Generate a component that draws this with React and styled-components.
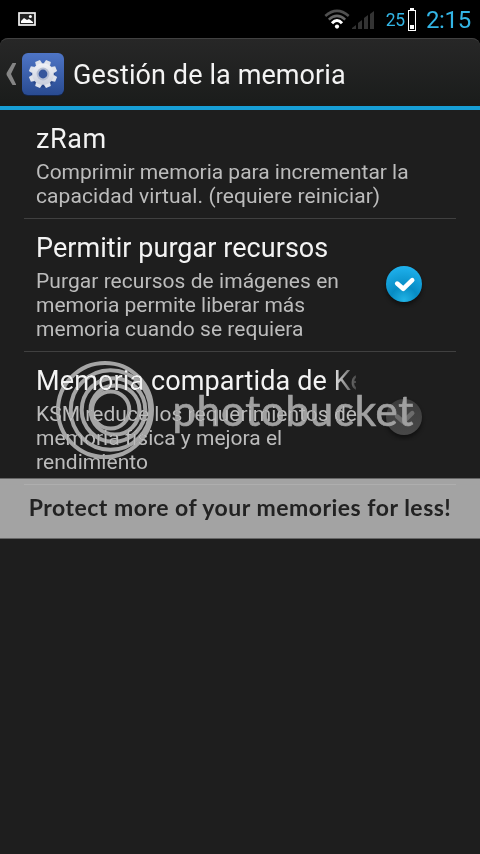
import styled, { createGlobalStyle } from "styled-components";

const preferences = [
    {
        title: "zRam",
        titleSpacing: 0.6,
        lines: [
            ["Comprimir memoria para incrementar la", -0.02],
            ["capacidad virtual. (requiere reiniciar)", 0.09],
        ],
    },
    {
        title: "Permitir purgar recursos",
        titleSpacing: 0.05,
        lines: [
            ["Purgar recursos de imágenes en", 0.05],
            ["memoria permite liberar más", -0.03],
            ["memoria cuando se requiera", 0.04],
        ],
        toggle: "on",
    },
    {
        title: "Memoria compartida de Kernel",
        titleSpacing: 0.12,
        lines: [
            ["KSM reduce los requerimientos de", 0.03],
            ["memoria física y mejora el", 0],
            ["rendimiento", 0.05],
        ],
        toggle: "off",
        fade: true,
    },
];

const PictureIcon = () => (
    <svg width="18" height="14" viewBox="0 0 18 14">
        <rect x="1" y="1" width="16" height="12" fill="#222" stroke="#f2f2f2" strokeWidth="1.7" />
        <path d="M3 11V9l3-3 3 2 2-1 4 3v1z" fill="#fff" />
        <circle cx="12.4" cy="4.4" r="1.5" fill="#fff" />
    </svg>
);

const WifiIcon = () => (
    <svg width="26" height="20" viewBox="0 0 26 20" fill="none" strokeWidth="2.5">
        <path d="M1.3 7Q13 -3.2 24.7 7" stroke="#505050" />
        <path d="M4.8 10.6Q13 3.2 21.2 10.6" stroke="#666" />
        <path d="M8 14.3Q13 8.7 18 14.3" stroke="#fff" strokeWidth="3" />
        <circle cx="13" cy="17.6" r="2.1" fill="#fff" />
    </svg>
);

const SignalIcon = () => (
    <svg width="22" height="18" viewBox="0 0 22 18" fill="#333">
        <path d="M0 18v-1l4-3v4zM6 18v-6l4-3v9zM12 18V7l4-3v14zM18 18V3l4-3v18z" />
    </svg>
);

const BatteryIcon = () => (
    <svg width="8" height="23" viewBox="0 0 8 23">
        <path d="M2 0h4v2H2z" fill="#fff" />
        <rect x=".5" y="2.5" width="7" height="20" fill="none" stroke="#fff" />
        <path d="M2 17h4v4H2z" fill="#fff" />
    </svg>
);

const BackIcon = () => (
    <svg width="11" height="22" viewBox="0 0 11 22">
        <path d="M7.5 0h3.9L6 11l5.4 11H7.5L1.6 12v-2z" fill="#858585" />
    </svg>
);

const teeth = [22.5, 67.5, 112.5, 157.5, 202.5, 247.5, 292.5, 337.5];

const GearIcon = () => (
    <svg width="42" height="43" viewBox="0 0 42 43">
        <defs>
            <linearGradient id="tile" x2="0" y2="1">
                <stop offset="0" stopColor="#4e75c6" />
                <stop offset="1" stopColor="#294b91" />
            </linearGradient>
            <linearGradient id="metal" gradientUnits="userSpaceOnUse" x1="0" y1="-14" x2="0" y2="14">
                <stop offset="0" stopColor="#f6f7fb" />
                <stop offset="1" stopColor="#c3c9d8" />
            </linearGradient>
        </defs>
        <rect y="1" width="42" height="42" rx="6" fill="#142549" />
        <rect width="42" height="42" rx="6" fill="url(#tile)" />
        <circle cx="21" cy="22.5" r="12" fill="#1f3b78" opacity=".6" />
        <g transform="translate(21 21)" fill="url(#metal)">
            {teeth.map((angle) => (
                <path key={angle} d="M-3.4-10l.8-4.2h5.2l.8 4.2z" transform={`rotate(${angle})`} fill="#dfe3ec" />
            ))}
            <circle r="10.8" />
            <circle r="6.4" fill="#b5bed3" />
            <circle r="4.4" fill="#35569d" />
        </g>
    </svg>
);

const Toggle = ({ on }) => (
    <svg width="48" height="48" viewBox="0 0 48 48">
        <defs>
            <radialGradient id="blue" cy=".95" r=".95">
                <stop offset="0" stopColor="#22b4e6" />
                <stop offset=".4" stopColor="#078cc4" />
                <stop offset="1" stopColor="#1fb2ee" />
            </radialGradient>
            <linearGradient id="grey" x2="0" y2="1">
                <stop offset="0" stopColor="#3c3c3c" />
                <stop offset="1" stopColor="#484848" />
            </linearGradient>
            <filter id="soft" x="-30%" y="-30%" width="160%" height="160%">
                <feGaussianBlur stdDeviation="2" />
            </filter>
        </defs>
        <circle cx="24" cy="27" r="18" fill="#000" opacity=".45" filter="url(#soft)" />
        <circle cx="24" cy="24" r="18" fill={on ? "url(#blue)" : "url(#grey)"} />
        <path
            d="M17.2 23.6l6 5.2 9-8.6"
            fill="none"
            stroke={on ? "#fff" : "#6c6c6c"}
            strokeWidth="4.6"
            strokeLinecap="round"
            strokeLinejoin="round"
        />
    </svg>
);

const Rings = () => (
    <svg width="98" height="98" viewBox="0 0 98 98" fill="none" stroke="#a5a5a5" strokeWidth="4">
        <circle cx="49" cy="49" r="47" />
        <circle cx="54.5" cy="49" r="39.8" />
        <circle cx="57.5" cy="49" r="31.8" />
        <circle cx="59" cy="49" r="24.5" />
        <circle cx="54.7" cy="49" r="18.6" />
    </svg>
);

const App = () => {
    return (
        <>
            <GlobalStyle />
            <Screen>
                <StatusBar>
                    <PictureIcon />
                    <StatusRight>
                        <WifiIcon />
                        <SignalIcon />
                        <BatteryLevel>25</BatteryLevel>
                        <BatteryIcon />
                        <Clock>2:15</Clock>
                    </StatusRight>
                </StatusBar>
                <ActionBar>
                    <BackIcon />
                    <GearIcon />
                    <h1>Gestión de la memoria</h1>
                </ActionBar>
                <List>
                    {preferences.map((item) => (
                        <Row key={item.title}>
                            <RowText>
                                <RowTitle $spacing={item.titleSpacing} $fade={item.fade}>
                                    {item.title}
                                </RowTitle>
                                {item.lines.map(([text, spacing]) => (
                                    <Summary key={text} $spacing={spacing}>
                                        {text}
                                    </Summary>
                                ))}
                            </RowText>
                            {item.toggle && (
                                <ToggleCell>
                                    <Toggle on={item.toggle === "on"} />
                                </ToggleCell>
                            )}
                        </Row>
                    ))}
                </List>
                <Brand>
                    <Rings />
                    <span>photobucket</span>
                </Brand>
                <Banner>Protect more of your memories for less!</Banner>
            </Screen>
        </>
    );
};

const GlobalStyle = createGlobalStyle`
    body {
        margin: 0;
        background: #000;
    }

    svg {
        display: block;
        flex: none;
    }
`;

const Screen = styled.div`
    position: relative;
    width: 480px;
    height: 854px;
    overflow: hidden;
    background: #1e1e1e;
    color: #f3f3f3;
    font-family: Roboto, sans-serif;
    white-space: nowrap;
`;

const StatusBar = styled.header`
    display: flex;
    justify-content: space-between;
    align-items: center;
    box-sizing: border-box;
    height: 38px;
    padding: 0 9px 0 18px;
    background: #000;
`;

const StatusRight = styled.div`
    display: flex;
    align-items: center;
    color: #33b5e5;

    svg + svg {
        margin: 2px 0 0 2px;
    }
`;

const BatteryLevel = styled.span`
    margin: 2px 3px 0 12px;
    font-size: 17.5px;
    letter-spacing: -0.2px;
`;

const Clock = styled.span`
    margin-left: 10px;
    font-size: 24px;
    line-height: 38px;
    letter-spacing: -0.3px;
    transform: translateY(1px);
`;

const ActionBar = styled.div`
    display: flex;
    align-items: center;
    box-sizing: border-box;
    height: 72px;
    padding: 3px 5px 0;
    border-top: 1px solid #414141;
    border-bottom: 4px solid #179fd6;
    border-radius: 8px 8px 0 0;
    background: linear-gradient(#272727, #1a1c1b);
    box-shadow: 0 -8px 0 8px #000;
    clip-path: inset(0);

    svg + svg {
        margin-left: 6px;
    }

    h1 {
        margin: 1px 0 0 9px;
        font-size: 27px;
        font-weight: 400;
        line-height: 34px;
        letter-spacing: 0.1px;
    }
`;

const List = styled.main`
    padding: 0 24px;
`;

const Row = styled.section`
    display: flex;
    align-items: center;
    padding: 12px 12px 10px;
    border-bottom: 1px solid #404040;
`;

const RowText = styled.div`
    flex: none;
    width: 320px;
`;

const RowTitle = styled.h2`
    margin: 0 0 3px;
    overflow: hidden;
    font-size: 27px;
    font-weight: 400;
    line-height: 35px;
    letter-spacing: ${({ $spacing }) => $spacing}px;
    mask-image: ${({ $fade }) => ($fade ? "linear-gradient(to right, #000 296px, transparent 326px)" : "none")};
`;

const Summary = styled.p`
    margin: 0;
    color: #bcbcbc;
    font-size: 21px;
    line-height: 24px;
    letter-spacing: ${({ $spacing }) => $spacing}px;
`;

const ToggleCell = styled.div`
    margin: 0 0 4px 24px;
`;

/* Lightens what lies below, so the row text stays readable */
const Brand = styled.div`
    position: absolute;
    top: 361px;
    left: 56px;
    display: flex;
    align-items: center;
    height: 98px;
    mix-blend-mode: lighten;

    span {
        margin-left: 18.5px;
        color: #a0a0a0;
        font-family: Lato, sans-serif;
        font-size: 42px;
        font-weight: 400;
        letter-spacing: 0.75px;
        -webkit-text-stroke: 0.7px #a0a0a0;
    }
`;

const Banner = styled.div`
    position: absolute;
    top: 478px;
    left: 0;
    box-sizing: border-box;
    width: 480px;
    height: 61px;
    border: solid #666;
    border-width: 1px 0;
    background: rgba(227, 227, 227, 0.68);
    background-clip: padding-box;
    color: #222;
    font-family: Lato, sans-serif;
    font-size: 23px;
    font-weight: 700;
    line-height: 57px;
    letter-spacing: 0.5px;
    text-align: center;
`;

export default App;
